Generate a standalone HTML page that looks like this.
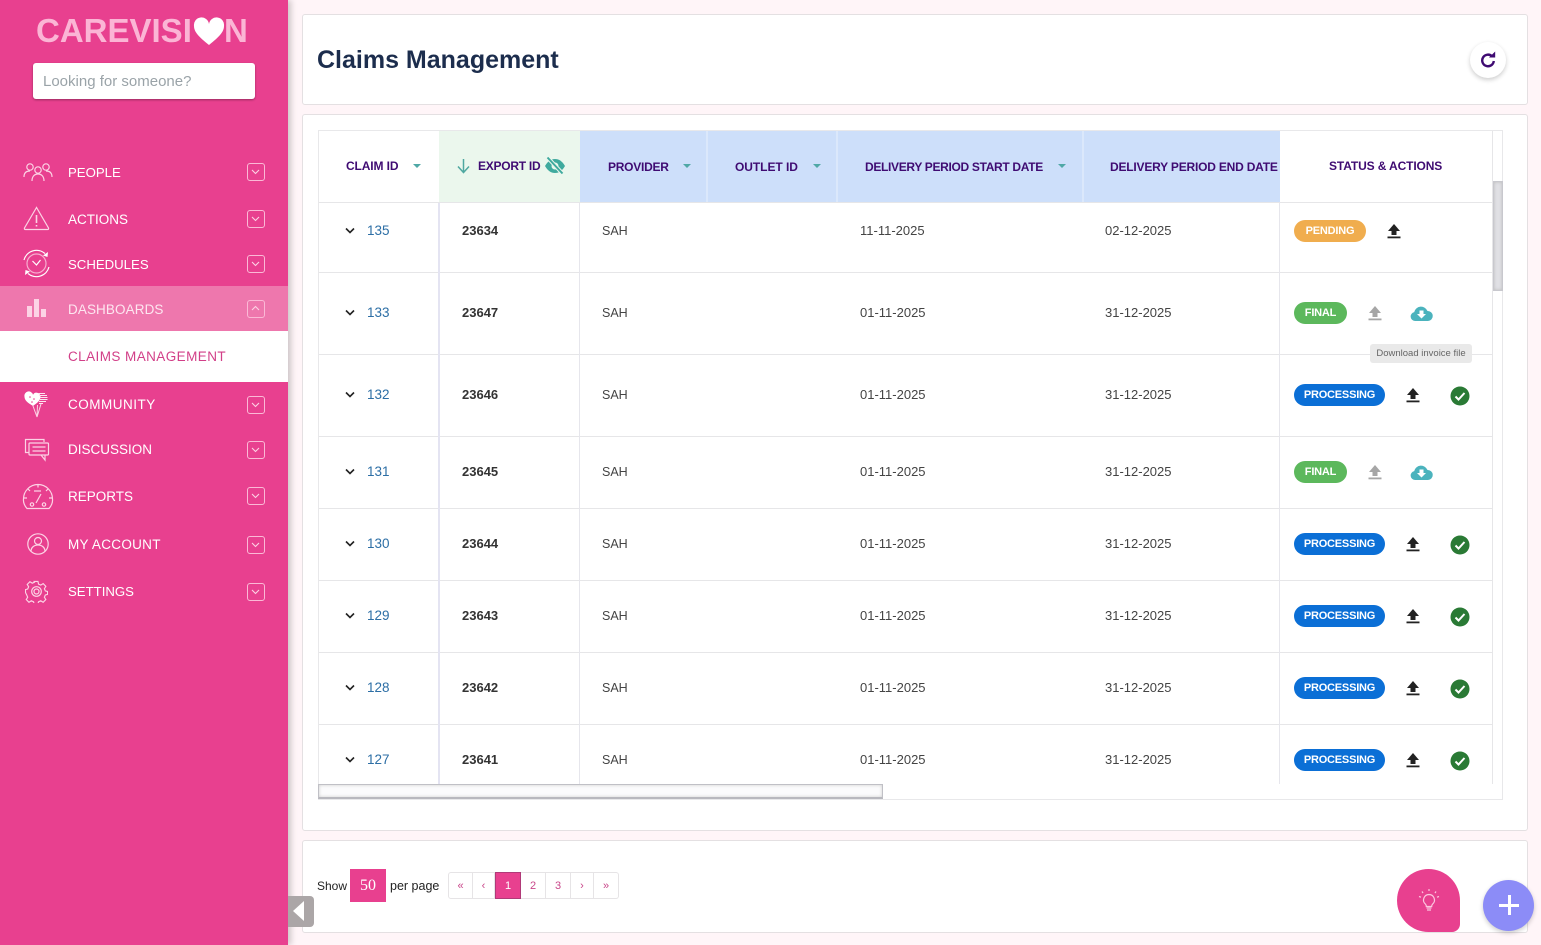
<!DOCTYPE html>
<html lang="en"><head><meta charset="utf-8"><title>Claims Management</title>
<style>
*{box-sizing:border-box}
html,body{margin:0;padding:0}
body{width:1541px;height:945px;position:relative;overflow:hidden;background:#fff5f8;font-family:"Liberation Sans",sans-serif;color:#333}
.a{position:absolute}
.t{position:absolute;white-space:nowrap;height:20px;line-height:20px;font-size:13px}
.card{position:absolute;background:#fff;border:1px solid #e4e0e2;border-radius:3px}
#side{left:0;top:0;width:288px;height:945px;background:#e8408f;box-shadow:3px 0 6px rgba(0,0,0,.2)}
.nav{color:#fff;font-size:13.5px;left:68px}
.box{position:absolute;left:247px;width:18px;height:18px;border:1.5px solid #fbb9d6;border-radius:3px}
.box svg{position:absolute;left:3px;top:3px}
.ic{position:absolute;fill:none;stroke:#fcd3e5;stroke-width:1.2}
.h{position:absolute;top:131px;height:72px}
.th{color:#3f0b72;font-weight:bold;font-size:12px;letter-spacing:-.25px}
.caret{position:absolute;top:164px;width:0;height:0;border-left:4.5px solid transparent;border-right:4.5px solid transparent;border-top:4.5px solid #4fa8a6}
.hl{position:absolute;left:319px;width:1173px;height:1px;background:#e6e6e8}
.vl{position:absolute;top:203px;height:581px;background:#e6e6ec;width:1px}
.chev{position:absolute;left:345px}
.id{left:367px;color:#2c6ea5;font-size:13.5px}
.ex{left:462px;font-weight:bold;color:#333}
.pr{left:602px;font-size:12.5px;color:#444}
.d1{left:860px;color:#444}.d2{left:1105px;color:#444}
.pill{position:absolute;left:1294px;height:22px;border-radius:11px;color:#fff;font-weight:bold;font-size:11px;line-height:23px;text-align:center;letter-spacing:-.2px}
.pg{position:absolute;top:872px;height:27px;line-height:26px;text-align:center;font-size:11px;color:#c9478a;border:1px solid #e6e4e6;border-left:0;font-family:"Liberation Sans",sans-serif}
</style></head><body>

<div class="card" style="left:302px;top:14px;width:1226px;height:91px"></div>
<div class="t" style="left:317px;top:50px;font-size:25px;font-weight:bold;color:#1c2d4d">Claims Management</div>
<div class="a" style="left:1470px;top:42px;width:36px;height:36px;border-radius:50%;background:#fff;box-shadow:0 2px 5px rgba(0,0,0,.2)"></div>
<svg class="a" style="left:1479px;top:50px" width="18" height="18" viewBox="0 0 18 18" fill="none"><path d="M13.200 6.400A5.800 5.800 0 1 0 14.800 11" stroke="#3f0b72" stroke-width="2.400"/><path d="M10 7.500h6.200V1.500z" fill="#3f0b72"/></svg>

<div class="card" style="left:302px;top:114px;width:1226px;height:717px"></div>
<div class="a" style="left:318px;top:130px;width:1185px;height:670px;border:1px solid #e8e8ea"></div>

<!-- header -->
<div class="h" style="left:439px;width:141px;background:#ebf7ed"></div>
<div class="h" style="left:580px;width:700px;background:#cddffa"></div>
<div class="h" style="left:706px;width:2px;background:#dbe8fb"></div>
<div class="h" style="left:836px;width:2px;background:#dbe8fb"></div>
<div class="h" style="left:1082px;width:2px;background:#dbe8fb"></div>
<div class="t th" style="left:346px;top:156px;letter-spacing:-.12px">CLAIM ID</div><div class="caret" style="left:413px"></div>
<svg class="a" style="left:456px;top:158px" width="15" height="16" viewBox="0 0 15 16" fill="none" stroke="#4fa8a0" stroke-width="1.5"><path d="M7.5 1v13M2 8.5l5.5 6 5.500-6"/></svg>
<div class="t th" style="left:478px;top:156px">EXPORT ID</div>
<svg class="a" style="left:544px;top:156px" width="22" height="20" viewBox="0 0 22 20"><path d="M1 10c3-5 6-7 10-7s7 2 10 7c-3 5-6 7-10 7S4 15 1 10z" fill="#3faa9e"/><circle cx="11" cy="10" r="3.500" fill="#ebf7ed"/><path d="M3 1l16 17" stroke="#ebf7ed" stroke-width="4"/><path d="M3.500 1.500l15 16" stroke="#3faa9e" stroke-width="2"/></svg>
<div class="t th" style="left:608px;top:157px">PROVIDER</div><div class="caret" style="left:683px"></div>
<div class="t th" style="left:735px;top:157px;letter-spacing:-.05px">OUTLET ID</div><div class="caret" style="left:813px"></div>
<div class="t th" style="left:865px;top:157px;letter-spacing:-.32px">DELIVERY PERIOD START DATE</div><div class="caret" style="left:1058px"></div>
<div class="t th" style="left:1110px;top:157px;letter-spacing:-.2px">DELIVERY PERIOD END DATE</div>
<div class="t th" style="left:1329px;top:156px;letter-spacing:-.12px">STATUS &amp; ACTIONS</div>

<!-- grid -->
<div class="hl" style="top:202px"></div><div class="hl" style="top:272px"></div><div class="hl" style="top:354px"></div><div class="hl" style="top:436px"></div><div class="hl" style="top:508px"></div><div class="hl" style="top:580px"></div><div class="hl" style="top:652px"></div><div class="hl" style="top:724px"></div>
<div class="vl" style="left:438px;width:2px;background:#e4e4f2"></div><div class="vl" style="left:579px"></div><div class="vl" style="left:1279px"></div>
<div class="a" style="left:1492px;top:131px;width:1px;height:653px;background:#e6e6e8"></div>
<div class="a" style="left:1493px;top:181px;width:10px;height:110px;background:#e0e0e5;border:1px solid #c8c8ce;box-shadow:inset 0 0 3px #bbb"></div>
<div class="a" style="left:318px;top:784px;width:565px;height:15px;background:#fbfbfc;border:1px solid #c0c0c6;border-bottom:2px solid #b8b8be;box-shadow:inset 0 0 3px #ccc"></div>

<!-- rows -->
<svg class="chev" style="top:227px" width="10" height="8" viewBox="0 0 10 8" fill="none" stroke="#222" stroke-width="1.600"><path d="M1 1.500l4 4 4-4"/></svg>
<div class="t id" style="top:221px">135</div><div class="t ex" style="top:221px">23634</div><div class="t pr" style="top:221px">SAH</div><div class="t d1" style="top:221px">11-11-2025</div><div class="t d2" style="top:221px">02-12-2025</div>
<div class="pill" style="top:220px;width:72px;background:#f0ad4e">PENDING</div>
<svg class="a" style="left:1386px;top:223px" width="16" height="16" viewBox="0 0 16 16" fill="#222"><path d="M8 1L2 8h3.500v4h5V8H14z"/><rect x="1.500" y="13.500" width="13" height="1.800"/></svg>

<svg class="chev" style="top:309px" width="10" height="8" viewBox="0 0 10 8" fill="none" stroke="#222" stroke-width="1.600"><path d="M1 1.500l4 4 4-4"/></svg>
<div class="t id" style="top:303px">133</div><div class="t ex" style="top:303px">23647</div><div class="t pr" style="top:303px">SAH</div><div class="t d1" style="top:303px">01-11-2025</div><div class="t d2" style="top:303px">31-12-2025</div>
<div class="pill" style="top:302px;width:53px;background:#5cb85c">FINAL</div>
<svg class="a" style="left:1367px;top:305px" width="16" height="16" viewBox="0 0 16 16" fill="#a6a6a6"><path d="M8 1L2 8h3.500v4h5V8H14z"/><rect x="1.500" y="13.500" width="13" height="1.800"/></svg>
<svg class="a" style="left:1410px;top:305px" width="23" height="17" viewBox="0 0 23 17"><path d="M5 16a4.500 4.500 0 0 1-.8-8.900A7 7 0 0 1 17.500 6a5 5 0 0 1 .5 10z" fill="#4bb3bd"/><path d="M9.500 5.500h4V9h2.500l-4.500 4.500L7 9h2.500z" fill="#fff"/></svg>
<div class="a" style="left:1370px;top:344px;width:102px;height:19px;background:#e9e9e9;border-radius:3px;color:#666;font-size:9.500px;line-height:19px;text-align:center">Download invoice file</div>

<svg class="chev" style="top:391px" width="10" height="8" viewBox="0 0 10 8" fill="none" stroke="#222" stroke-width="1.600"><path d="M1 1.500l4 4 4-4"/></svg>
<div class="t id" style="top:385px">132</div><div class="t ex" style="top:385px">23646</div><div class="t pr" style="top:385px">SAH</div><div class="t d1" style="top:385px">01-11-2025</div><div class="t d2" style="top:385px">31-12-2025</div>
<div class="pill" style="top:384px;width:91px;background:#0b6fd6">PROCESSING</div>
<svg class="a" style="left:1405px;top:387px" width="16" height="16" viewBox="0 0 16 16" fill="#222"><path d="M8 1L2 8h3.500v4h5V8H14z"/><rect x="1.500" y="13.500" width="13" height="1.800"/></svg>
<svg class="a" style="left:1450px;top:386px" width="20" height="20" viewBox="0 0 20 20"><circle cx="10" cy="10" r="9.500" fill="#2a7a35"/><path d="M5.500 10.500l3 3 6-6.500" fill="none" stroke="#fff" stroke-width="2"/></svg>

<svg class="chev" style="top:468px" width="10" height="8" viewBox="0 0 10 8" fill="none" stroke="#222" stroke-width="1.600"><path d="M1 1.500l4 4 4-4"/></svg>
<div class="t id" style="top:462px">131</div><div class="t ex" style="top:462px">23645</div><div class="t pr" style="top:462px">SAH</div><div class="t d1" style="top:462px">01-11-2025</div><div class="t d2" style="top:462px">31-12-2025</div>
<div class="pill" style="top:461px;width:53px;background:#5cb85c">FINAL</div>
<svg class="a" style="left:1367px;top:464px" width="16" height="16" viewBox="0 0 16 16" fill="#a6a6a6"><path d="M8 1L2 8h3.500v4h5V8H14z"/><rect x="1.500" y="13.500" width="13" height="1.800"/></svg>
<svg class="a" style="left:1410px;top:464px" width="23" height="17" viewBox="0 0 23 17"><path d="M5 16a4.500 4.500 0 0 1-.8-8.900A7 7 0 0 1 17.500 6a5 5 0 0 1 .5 10z" fill="#4bb3bd"/><path d="M9.500 5.500h4V9h2.500l-4.500 4.500L7 9h2.500z" fill="#fff"/></svg>

<svg class="chev" style="top:540px" width="10" height="8" viewBox="0 0 10 8" fill="none" stroke="#222" stroke-width="1.600"><path d="M1 1.500l4 4 4-4"/></svg>
<div class="t id" style="top:534px">130</div><div class="t ex" style="top:534px">23644</div><div class="t pr" style="top:534px">SAH</div><div class="t d1" style="top:534px">01-11-2025</div><div class="t d2" style="top:534px">31-12-2025</div>
<div class="pill" style="top:533px;width:91px;background:#0b6fd6">PROCESSING</div>
<svg class="a" style="left:1405px;top:536px" width="16" height="16" viewBox="0 0 16 16" fill="#222"><path d="M8 1L2 8h3.500v4h5V8H14z"/><rect x="1.500" y="13.500" width="13" height="1.800"/></svg>
<svg class="a" style="left:1450px;top:535px" width="20" height="20" viewBox="0 0 20 20"><circle cx="10" cy="10" r="9.500" fill="#2a7a35"/><path d="M5.500 10.500l3 3 6-6.500" fill="none" stroke="#fff" stroke-width="2"/></svg>

<svg class="chev" style="top:612px" width="10" height="8" viewBox="0 0 10 8" fill="none" stroke="#222" stroke-width="1.600"><path d="M1 1.500l4 4 4-4"/></svg>
<div class="t id" style="top:606px">129</div><div class="t ex" style="top:606px">23643</div><div class="t pr" style="top:606px">SAH</div><div class="t d1" style="top:606px">01-11-2025</div><div class="t d2" style="top:606px">31-12-2025</div>
<div class="pill" style="top:605px;width:91px;background:#0b6fd6">PROCESSING</div>
<svg class="a" style="left:1405px;top:608px" width="16" height="16" viewBox="0 0 16 16" fill="#222"><path d="M8 1L2 8h3.500v4h5V8H14z"/><rect x="1.500" y="13.500" width="13" height="1.800"/></svg>
<svg class="a" style="left:1450px;top:607px" width="20" height="20" viewBox="0 0 20 20"><circle cx="10" cy="10" r="9.500" fill="#2a7a35"/><path d="M5.500 10.500l3 3 6-6.500" fill="none" stroke="#fff" stroke-width="2"/></svg>

<svg class="chev" style="top:684px" width="10" height="8" viewBox="0 0 10 8" fill="none" stroke="#222" stroke-width="1.600"><path d="M1 1.500l4 4 4-4"/></svg>
<div class="t id" style="top:678px">128</div><div class="t ex" style="top:678px">23642</div><div class="t pr" style="top:678px">SAH</div><div class="t d1" style="top:678px">01-11-2025</div><div class="t d2" style="top:678px">31-12-2025</div>
<div class="pill" style="top:677px;width:91px;background:#0b6fd6">PROCESSING</div>
<svg class="a" style="left:1405px;top:680px" width="16" height="16" viewBox="0 0 16 16" fill="#222"><path d="M8 1L2 8h3.500v4h5V8H14z"/><rect x="1.500" y="13.500" width="13" height="1.800"/></svg>
<svg class="a" style="left:1450px;top:679px" width="20" height="20" viewBox="0 0 20 20"><circle cx="10" cy="10" r="9.500" fill="#2a7a35"/><path d="M5.500 10.500l3 3 6-6.500" fill="none" stroke="#fff" stroke-width="2"/></svg>

<svg class="chev" style="top:756px" width="10" height="8" viewBox="0 0 10 8" fill="none" stroke="#222" stroke-width="1.600"><path d="M1 1.500l4 4 4-4"/></svg>
<div class="t id" style="top:750px">127</div><div class="t ex" style="top:750px">23641</div><div class="t pr" style="top:750px">SAH</div><div class="t d1" style="top:750px">01-11-2025</div><div class="t d2" style="top:750px">31-12-2025</div>
<div class="pill" style="top:749px;width:91px;background:#0b6fd6">PROCESSING</div>
<svg class="a" style="left:1405px;top:752px" width="16" height="16" viewBox="0 0 16 16" fill="#222"><path d="M8 1L2 8h3.500v4h5V8H14z"/><rect x="1.500" y="13.500" width="13" height="1.800"/></svg>
<svg class="a" style="left:1450px;top:751px" width="20" height="20" viewBox="0 0 20 20"><circle cx="10" cy="10" r="9.500" fill="#2a7a35"/><path d="M5.500 10.500l3 3 6-6.500" fill="none" stroke="#fff" stroke-width="2"/></svg>

<!-- footer -->
<div class="card" style="left:302px;top:840px;width:1226px;height:93px"></div>
<div class="t" style="left:317px;top:876px;font-size:12px;color:#222">Show</div>
<div class="a" style="left:350px;top:869px;width:36px;height:33px;background:#e8408f;color:#fff;font:16px/33px 'Liberation Serif',serif;text-align:center">50</div>
<div class="t" style="left:390px;top:876px;font-size:12.500px;color:#222">per page</div>
<div class="pg" style="left:448px;width:25px;border-left:1px solid #e6e4e6;border-radius:3px 0 0 3px">«</div>
<div class="pg" style="left:473px;width:22px">‹</div>
<div class="pg" style="left:495px;width:26px;background:#e8408f;color:#fff;border:1px solid #b03a78">1</div>
<div class="pg" style="left:521px;width:25px">2</div>
<div class="pg" style="left:546px;width:25px">3</div>
<div class="pg" style="left:571px;width:23px">›</div>
<div class="pg" style="left:594px;width:25px;border-radius:0 3px 3px 0">»</div>

<div class="a" style="left:1397px;top:869px;width:63px;height:63px;background:#e8408f;border-radius:50% 50% 8px 50%"></div>
<svg class="a" style="left:1417px;top:888px" width="24" height="26" viewBox="0 0 24 26" fill="none" stroke="#fcc6df" stroke-width="1.200"><path d="M12 6.500a5.500 5.500 0 0 0-3.500 9.700c.6.600.8 1.300.8 2.300h5.400c0-1 .2-1.700.8-2.300A5.500 5.500 0 0 0 12 6.500z"/><path d="M9.500 20h5M10 22h4M12 1v2M5 3.500l1 1.500M19 3.500l-1 1.500M2 8.500l2 .7M22 8.500l-2 .7" /></svg>
<div class="a" style="left:1483px;top:880px;width:51px;height:51px;border-radius:50%;background:#8c8cf7;box-shadow:0 2px 5px rgba(0,0,0,.2)"></div>
<div class="a" style="left:1499px;top:904px;width:20px;height:3px;background:#fff"></div>
<div class="a" style="left:1507.500px;top:895px;width:3px;height:20px;background:#fff"></div>

<!-- sidebar -->
<div class="a" id="side"></div>
<div class="a" style="left:288px;top:896px;width:26px;height:31px;background:#aba6a7;border-radius:0 4px 4px 0"></div>
<div class="a" style="left:293px;top:901px;width:0;height:0;border-top:10px solid transparent;border-bottom:10px solid transparent;border-right:11px solid #fff"></div>

<div class="t" style="left:36px;top:15px;height:32px;line-height:32px;font-size:33px;font-weight:bold;color:#fbb5d5">CAREVISI</div>
<svg class="a" style="left:193px;top:17px" width="32" height="29" viewBox="0 0 32 29"><path d="M16 28C6 20 1 15 1 9a7.500 7.500 0 0 1 15-2 7.500 7.500 0 0 1 15 2c0 6-5 11-15 19z" fill="#fff"/></svg>
<div class="t" style="left:224px;top:15px;height:32px;line-height:32px;font-size:33px;font-weight:bold;color:#fbb5d5">N</div>
<div class="a" style="left:33px;top:63px;width:222px;height:36px;background:#fff;border-radius:3px;box-shadow:0 1px 2px rgba(0,0,0,.35)"></div>
<div class="t" style="left:43px;top:72px;font-size:15px;color:#9aa3a8">Looking for someone?</div>

<div class="a" style="left:0;top:286px;width:288px;height:45px;background:#ee77ad"></div>
<div class="a" style="left:0;top:331px;width:288px;height:51px;background:#fff"></div>

<div class="t nav" style="top:163px;font-size:13.200px">PEOPLE</div>
<div class="t nav" style="top:210px">ACTIONS</div>
<div class="t nav" style="top:255px;font-size:13.200px">SCHEDULES</div>
<div class="t nav" style="top:300px;color:#fde6f0;letter-spacing:.1px">DASHBOARDS</div>
<div class="t nav" style="top:347px;color:#d23f88;letter-spacing:.43px">CLAIMS MANAGEMENT</div>
<div class="t nav" style="top:395px;letter-spacing:.5px">COMMUNITY</div>
<div class="t nav" style="top:440px">DISCUSSION</div>
<div class="t nav" style="top:487px">REPORTS</div>
<div class="t nav" style="top:535px;letter-spacing:.3px">MY ACCOUNT</div>
<div class="t nav" style="top:582px;font-size:13.200px">SETTINGS</div>

<div class="box" style="top:163px"><svg width="9" height="9" viewBox="0 0 9 9" fill="none" stroke="#fcd3e5" stroke-width="1.100"><path d="M1 3l3.500 3.500L8 3"/></svg></div>
<div class="box" style="top:210px"><svg width="9" height="9" viewBox="0 0 9 9" fill="none" stroke="#fcd3e5" stroke-width="1.100"><path d="M1 3l3.500 3.500L8 3"/></svg></div>
<div class="box" style="top:255px"><svg width="9" height="9" viewBox="0 0 9 9" fill="none" stroke="#fcd3e5" stroke-width="1.100"><path d="M1 3l3.500 3.500L8 3"/></svg></div>
<div class="box" style="top:300px"><svg width="9" height="9" viewBox="0 0 9 9" fill="none" stroke="#fcd3e5" stroke-width="1.100"><path d="M1 6l3.500-3.500L8 6"/></svg></div>
<div class="box" style="top:396px"><svg width="9" height="9" viewBox="0 0 9 9" fill="none" stroke="#fcd3e5" stroke-width="1.100"><path d="M1 3l3.500 3.500L8 3"/></svg></div>
<div class="box" style="top:441px"><svg width="9" height="9" viewBox="0 0 9 9" fill="none" stroke="#fcd3e5" stroke-width="1.100"><path d="M1 3l3.500 3.500L8 3"/></svg></div>
<div class="box" style="top:487px"><svg width="9" height="9" viewBox="0 0 9 9" fill="none" stroke="#fcd3e5" stroke-width="1.100"><path d="M1 3l3.500 3.500L8 3"/></svg></div>
<div class="box" style="top:536px"><svg width="9" height="9" viewBox="0 0 9 9" fill="none" stroke="#fcd3e5" stroke-width="1.100"><path d="M1 3l3.500 3.500L8 3"/></svg></div>
<div class="box" style="top:583px"><svg width="9" height="9" viewBox="0 0 9 9" fill="none" stroke="#fcd3e5" stroke-width="1.100"><path d="M1 3l3.500 3.500L8 3"/></svg></div>

<svg class="ic" style="left:23px;top:162px" width="30" height="20" viewBox="0 0 30 20"><circle cx="7" cy="5" r="3.200"/><circle cx="15" cy="8" r="3.200"/><circle cx="23" cy="5" r="3.200"/><path d="M1 15c0-4 2-6 6-6M29 15c0-4-2-6-6-6M9 19c0-4 2-7 6-7s6 3 6 7"/></svg>
<svg class="ic" style="left:23px;top:206px" width="27" height="25" viewBox="0 0 27 25"><path d="M13.500 1.500L1.500 22q-.5 1.500 1 1.500h22q1.500 0 1-1.500z"/><path d="M13.500 9v8M13.500 19v1.500" stroke-width="1.600"/></svg>
<svg class="ic" style="left:22px;top:249px" width="29" height="29" viewBox="0 0 29 29"><path d="M2 11A13 13 0 0 1 23 4.500M27 18A13 13 0 0 1 6 24.500" stroke="#fff"/><circle cx="14.500" cy="14.500" r="9.500" opacity=".75"/><path d="M10.500 12l4 4 4-5" stroke="#fff"/><path d="M26 3l-.5 5-4.500-1.500z" fill="#fff" stroke="none"/><path d="M3 26l.5-5 4.500 1.500z" fill="#fff" stroke="none"/></svg>
<svg class="a" style="left:27px;top:299px" width="20" height="19" viewBox="0 0 20 19" fill="#fcd3e5"><rect x="0" y="7" width="5" height="11"/><rect x="7" y="0" width="5" height="18"/><rect x="14" y="10" width="5" height="8"/></svg>
<svg class="a" style="left:24px;top:391px" width="25" height="27" viewBox="0 0 25 27"><path d="M9 15C3 11.500.5 9 .5 5.800a4 4 0 0 1 8.500-2 4 4 0 0 1 7.500 2C16.500 9 14 11.500 9 15z" fill="#fff"/><path d="M14 2.500h7M15 4.500h8M16.500 6.500h7M16 8.500h7.500M15 10.500h7M15 12.500h4" stroke="#fde6f0" stroke-width="1.100"/><circle cx="6" cy="6" r=".8" fill="#e8408f"/><circle cx="10" cy="8" r=".8" fill="#e8408f"/><circle cx="8" cy="11" r=".8" fill="#e8408f"/><path d="M9 15l4 11 .5-12M13 26l4-13" fill="none" stroke="#fcd3e5" stroke-width="1"/></svg>
<svg class="ic" style="left:24px;top:438px" width="26" height="24" viewBox="0 0 26 24"><path d="M20 4V1.500H1.500v13H5"/><rect x="5" y="5" width="19.500" height="12" rx="1"/><path d="M8.500 9h13M8.500 13h13M17 17l4 5v-5"/></svg>
<svg class="ic" style="left:22px;top:483px" width="32" height="27" viewBox="0 0 32 27"><path d="M5 25.500Q1 21 1.500 16A14.500 14.500 0 0 1 30.500 16Q31 21 27 25.500z"/><path d="M16 1.500v3M6 6l2 2M26 6l-2 2M2 15h3M30 15h-3M12 8h7M19 11l-5 9"/><circle cx="10" cy="21.500" r="1.700"/><circle cx="22" cy="21.500" r="1.700"/></svg>
<svg class="ic" style="left:27px;top:533px" width="22" height="22" viewBox="0 0 22 22"><circle cx="11" cy="11" r="10.200"/><circle cx="11" cy="8" r="3.500"/><path d="M4 18.500c0-4 3-6.500 7-6.500s7 2.500 7 6.500"/></svg>
<svg class="ic" style="left:25px;top:580px" width="23" height="23" viewBox="0 0 23 23"><path d="M9.500 1.500h4l.6 2.800 2.300 1 2.500-1.500 2.800 2.800-1.500 2.500 1 2.300 2.300.6v3l-2.300.6-1 2.300 1.500 2.500-2.800 2.800-2.500-1.500-2.300 1-.6 2.300h-4l-.6-2.300-2.300-1-2.500 1.500-2.800-2.800 1.500-2.500-1-2.300L.5 13v-3l2.300-.6 1-2.300L2.300 4.600l2.800-2.800 2.500 1.500 2.300-1z" transform="scale(.96)"/><circle cx="11.500" cy="11.500" r="4.800"/><circle cx="11.500" cy="11.500" r="2.500"/></svg>
</body></html>
